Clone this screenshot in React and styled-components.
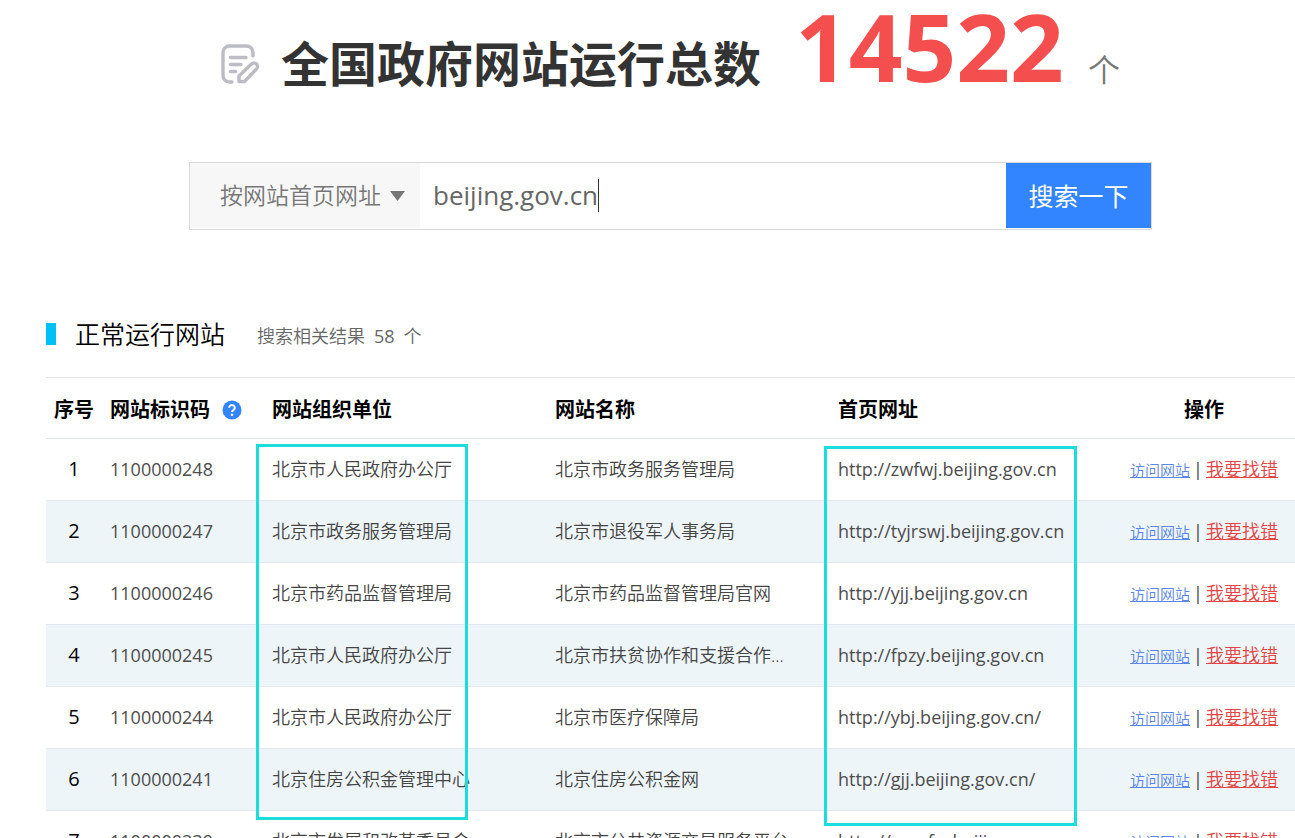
import { useState } from 'react';
import styled, { createGlobalStyle } from 'styled-components';

const GlobalStyle = createGlobalStyle`
  * {
    box-sizing: border-box;
  }

  body {
    margin: 0;
    background: #fff;
    color: #000;
    font-family: 'Open Sans', 'Noto Sans CJK SC', sans-serif;
    font-size: 18px;
  }

  button, input, select {
    font-family: inherit;
  }
`;

const Page = styled.main`
  padding-left: 46px;
`;

const Header = styled.header`
  display: flex;
  justify-content: center;
  align-items: baseline;
  height: 162px;
  padding-top: 1px;
  white-space: nowrap;
`;

const NoteIcon = styled.svg`
  align-self: flex-start;
  width: 38px;
  height: 40px;
  margin: 43px 22px 0 0;
`;

const Title = styled.h1`
  margin: 0;
  font-size: 48px;
  line-height: 60px;
  font-weight: 700;
  color: #333;
`;

const Total = styled.strong`
  margin-left: 34px;
  font-size: 94px;
  line-height: 90px;
  font-weight: 700;
  color: #f54e4e;
`;

const Unit = styled.span`
  margin-left: 24px;
  font-size: 32px;
  line-height: 40px;
  font-weight: 350;
  color: #777;
`;

const SearchForm = styled.form`
  display: flex;
  align-items: flex-start;
  max-width: 963px;
  height: 68px;
  margin: 0 auto;
  border: 1px solid #d9d9d9;
`;

const SelectBox = styled.div`
  position: relative;
  width: 230px;
  height: 65px;
`;

const Select = styled.select`
  appearance: none;
  width: 100%;
  height: 100%;
  padding: 0 30px 2px;
  border: 0;
  border-radius: 0;
  outline: 0;
  background: #f7f7f7;
  color: #777;
  font-size: 23px;
  font-weight: 350;
`;

const Arrow = styled.svg`
  position: absolute;
  top: 28px;
  right: 15px;
  width: 15px;
  height: 10px;
  pointer-events: none;
`;

const Field = styled.label`
  flex: 1;
  display: flex;
  align-items: center;
  height: 65px;
  padding-left: 13px;
`;

const Input = styled.input`
  field-sizing: content;
  padding: 0 0 2px;
  border: 0;
  outline: 0;
  background: transparent;
  color: #666;
  font-size: 26px;
  caret-color: transparent;
`;

const Caret = styled.span`
  width: 1px;
  height: 33px;
  background: #333;
`;

const SearchButton = styled.button`
  width: 145px;
  height: 65px;
  padding: 0 0 2px;
  border: 0;
  background: #3385ff;
  color: #fff;
  font-size: 25px;
  cursor: pointer;
`;

const SectionHead = styled.div`
  display: flex;
  align-items: center;
  height: 60px;
  margin: 74px 0 13px;
`;

const Marker = styled.span`
  width: 10px;
  height: 22px;
  background: #00c1f5;
`;

const SectionTitle = styled.h2`
  margin: 0 32px 0 19px;
  font-size: 25px;
  line-height: 32px;
  font-weight: 350;
`;

const ResultCount = styled.span`
  display: flex;
  gap: 9px;
  padding-top: 4px;
  line-height: 24px;
  font-weight: 350;
  color: #666;
`;

const Count = styled.span`
  font-weight: 400;
`;

const TableWrap = styled.section`
  position: relative;
`;

const Table = styled.table`
  width: 100%;
  table-layout: fixed;
  border-collapse: separate;
  border-spacing: 0;
`;

const Col = styled.col`
  width: ${({ $width }) => ($width ? `${$width}px` : 'auto')};
`;

const Th = styled.th`
  height: 62px;
  padding: 4px 8px 0;
  border-top: 1px solid #e4e4e4;
  border-bottom: 1px solid #e3e7f0;
  font-size: 20px;
  line-height: 28px;
  font-weight: 700;
  text-align: ${({ $center }) => ($center ? 'center' : 'left')};
  white-space: nowrap;
`;

const HeadLabel = styled.span`
  display: flex;
  align-items: center;
  gap: 12px;
`;

const HelpIcon = styled.svg`
  width: 20px;
  height: 20px;
`;

const Row = styled.tr`
  background: #fff;

  &:nth-child(even) {
    background: #edf5f9;
  }
`;

const Td = styled.td`
  height: 62px;
  padding: 0 8px 2px;
  border-bottom: 1px solid #e3e7f0;
  line-height: 24px;
  font-weight: 350;
  color: #444;
  white-space: nowrap;
  overflow: hidden;
  text-overflow: ellipsis;
`;

const IndexTd = styled(Td)`
  font-size: 20px;
  font-weight: 400;
  color: #000;
  text-align: center;
`;

const LatinTd = styled(Td)`
  font-weight: 400;
  color: #4d4d4d;
`;

const ActionTd = styled(Td)`
  padding: 0 8px;
`;

const Actions = styled.div`
  display: flex;
  justify-content: center;
  align-items: baseline;
  gap: 3px;
`;

const Divider = styled.span`
  font-weight: 400;
`;

const VisitLink = styled.a`
  font-size: 15px;
  color: #5b86e5;
`;

const ReportLink = styled.a`
  color: #e24545;
`;

const Highlight = styled.div`
  position: absolute;
  top: ${({ $top }) => $top}px;
  left: ${({ $left }) => $left}px;
  width: ${({ $width }) => $width}px;
  height: ${({ $height }) => $height}px;
  border: 3px solid #1bdedc;
  pointer-events: none;
`;

const sites = [
    { code: '1100000248', org: '北京市人民政府办公厅', name: '北京市政务服务管理局', url: 'http://zwfwj.beijing.gov.cn' },
    { code: '1100000247', org: '北京市政务服务管理局', name: '北京市退役军人事务局', url: 'http://tyjrswj.beijing.gov.cn' },
    { code: '1100000246', org: '北京市药品监督管理局', name: '北京市药品监督管理局官网', url: 'http://yjj.beijing.gov.cn' },
    { code: '1100000245', org: '北京市人民政府办公厅', name: '北京市扶贫协作和支援合作...', url: 'http://fpzy.beijing.gov.cn' },
    { code: '1100000244', org: '北京市人民政府办公厅', name: '北京市医疗保障局', url: 'http://ybj.beijing.gov.cn/' },
    { code: '1100000241', org: '北京住房公积金管理中心', name: '北京住房公积金网', url: 'http://gjj.beijing.gov.cn/' },
    { code: '1100000239', org: '北京市发展和改革委员会', name: '北京市公共资源交易服务平台', url: 'http://ggzyfw.beijing.gov.cn' },
];

const App = () => {
    const [keyword, setKeyword] = useState('beijing.gov.cn');

    return (
        <>
            <GlobalStyle />
            <Page>
                <Header>
                    <NoteIcon viewBox="0 0 38 40" fill="none" stroke="#bcbcc4" strokeWidth="3.4" strokeLinecap="round" strokeLinejoin="round" aria-hidden="true">
                        <path d="M32 12V8.5a6.5 6.5 0 0 0-6.5-6.5h-17A6.5 6.5 0 0 0 2 8.5v23A6.5 6.5 0 0 0 8.5 38H11" />
                        <path d="M9.5 13.5h15.5M9.5 20.5h10.5M9.5 27.5h5" />
                        <path d="M18 37.5v-5.500L30.5 20a3.300 3.300 0 0 1 5 5L23.500 37.500z" />
                    </NoteIcon>
                    <Title>全国政府网站运行总数</Title>
                    <Total>14522</Total>
                    <Unit>个</Unit>
                </Header>

                <SearchForm onSubmit={(e) => e.preventDefault()}>
                    <SelectBox>
                        <Select aria-label="搜索方式" defaultValue="url">
                            <option value="url">按网站首页网址</option>
                            <option value="name">按网站名称</option>
                            <option value="code">按网站标识码</option>
                        </Select>
                        <Arrow viewBox="0 0 15 10" aria-hidden="true">
                            <path d="M0 0h15L7.5 10z" fill="#777" />
                        </Arrow>
                    </SelectBox>
                    <Field>
                        <Input
                            aria-label="搜索内容"
                            value={keyword}
                            onChange={(e) => setKeyword(e.target.value)}
                        />
                        <Caret />
                    </Field>
                    <SearchButton type="submit">搜索一下</SearchButton>
                </SearchForm>

                <SectionHead>
                    <Marker />
                    <SectionTitle>正常运行网站</SectionTitle>
                    <ResultCount>
                        <span>搜索相关结果</span>
                        <Count>58</Count>
                        <span>个</span>
                    </ResultCount>
                </SectionHead>

                <TableWrap>
                    <Table>
                        <colgroup>
                            <Col $width={56} />
                            <Col $width={162} />
                            <Col />
                            <Col />
                            <Col />
                            <Col $width={182} />
                        </colgroup>
                        <thead>
                            <tr>
                                <Th>序号</Th>
                                <Th>
                                    <HeadLabel>
                                        网站标识码
                                        <HelpIcon viewBox="0 0 20 20" aria-hidden="true">
                                            <circle cx="10" cy="10" r="9.5" fill="#3385ff" />
                                            <path d="M7.2 7.8a2.8 2.6 0 1 1 4.4 2c-1 .7-1.600 1.100-1.600 2.200" fill="none" stroke="#fff" strokeWidth="2" />
                                            <circle cx="10" cy="14.8" r="1.3" fill="#fff" />
                                        </HelpIcon>
                                    </HeadLabel>
                                </Th>
                                <Th>网站组织单位</Th>
                                <Th>网站名称</Th>
                                <Th>首页网址</Th>
                                <Th $center>操作</Th>
                            </tr>
                        </thead>
                        <tbody>
                            {sites.map((site, index) => (
                                <Row key={site.code}>
                                    <IndexTd>{index + 1}</IndexTd>
                                    <LatinTd>{site.code}</LatinTd>
                                    <Td>{site.org}</Td>
                                    <Td>{site.name}</Td>
                                    <LatinTd>{site.url}</LatinTd>
                                    <ActionTd>
                                        <Actions>
                                            <VisitLink href={site.url}>访问网站</VisitLink>
                                            <Divider>|</Divider>
                                            <ReportLink href="#report">我要找错</ReportLink>
                                        </Actions>
                                    </ActionTd>
                                </Row>
                            ))}
                        </tbody>
                    </Table>
                    <Highlight $top={67} $left={210} $width={212} $height={376} />
                    <Highlight $top={69} $left={778} $width={253} $height={380} />
                </TableWrap>
            </Page>
        </>
    );
};

export default App;
